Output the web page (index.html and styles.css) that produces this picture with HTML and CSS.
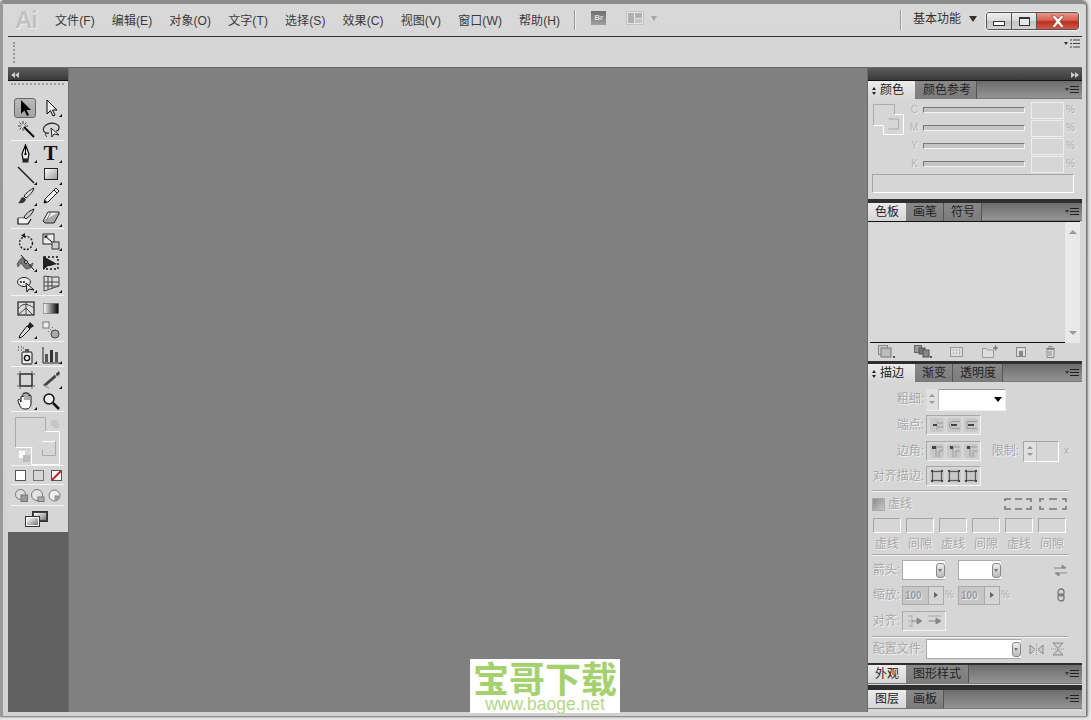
FILE: index.html
```html
<!DOCTYPE html>
<html lang="zh">
<head>
<meta charset="utf-8">
<title>Adobe Illustrator</title>
<link rel="stylesheet" href="styles.css">
</head>
<body>
<div class="window">
  <header class="titlebar">
    <span class="logo">Ai</span>
    <nav class="menu">
      <span>文件(F)</span><span>编辑(E)</span><span>对象(O)</span><span>文字(T)</span><span>选择(S)</span><span>效果(C)</span><span>视图(V)</span><span>窗口(W)</span><span>帮助(H)</span>
    </nav>
    <i class="vsep"></i>
    <span class="br">Br</span>
    <svg class="layout-ico" width="18" height="14" viewBox="0 0 18 14"><rect x=".5" y=".5" width="17" height="13" fill="#e4e4e4" stroke="#c4c4c4"/><rect x="2" y="2" width="6" height="10" fill="#b0b0b0"/><rect x="9" y="2" width="7" height="5" fill="#b0b0b0"/><rect x="9" y="8" width="7" height="4" fill="#c4c4c4"/></svg>
    <i class="tri-gray"></i>
    <span class="spacer"></span>
    <i class="vsep"></i>
    <span class="workspace">基本功能</span>
    <i class="tri-dark"></i>
    <div class="winctl">
      <span class="wbtn"><i class="min"></i></span>
      <span class="wbtn"><i class="max"></i></span>
      <span class="wbtn close"><svg width="16" height="13" viewBox="0 0 14 11"><path d="M1.500 .5h3.100L7 3.300 9.400 .5h3.100L8.700 5.400l3.800 5.100H9.400L7 7.400 4.600 10.500H1.500l3.800-5.100z" fill="#fff" stroke="#8a3a2e" stroke-width=".6"/></svg></span>
    </div>
  </header>
  <div class="optbar">
    <i class="grip-v"></i>
    <span class="opt-menu"><i class="tri-tiny"></i><svg width="10" height="9" viewBox="0 0 10 9"><path d="M0 1h2M3 1h7M0 4.500h2M3 4.500h7M0 8h2M3 8h7" stroke="#444"/></svg></span>
  </div>
  <main class="main">
    <aside class="toolbox">
      <div class="dock-head"><svg width="8" height="6" viewBox="0 0 8 6"><path d="M4 0v6L0 3zM8 0v6L4 3z" fill="#ccc"/></svg></div>
      <div class="tools">
        <i class="grip-h"></i>
        <div class="tgroup">
          <span class="tool selected"><svg viewBox="0 0 20 20"><path d="M6 2v14l3.400-3.400L12 18l2-1-2.500-5H16z"/></svg></span>
          <span class="tool more"><svg viewBox="0 0 20 20"><path d="M6 2v14l3.400-3.400L12 18l2-1-2.500-5H16z" fill="#eee" stroke="#000"/></svg></span>
          <span class="tool"><svg viewBox="0 0 20 20"><path d="M8 8l10 10" stroke="#000" stroke-width="2"/><path d="M7 2v3M7 9v3M2 7h3M9 7h3M3.500 3.500l2 2M10.500 3.500l-2 2M3.500 10.500l2-2" stroke="#444"/></svg></span>
          <span class="tool"><svg viewBox="0 0 20 20"><path d="M8 14C3 15 1 11 3 8s7-5 12-3 3 7 0 7" fill="none" stroke="#222" stroke-width="1.200"/><path d="M5 14c-1 2 0 3 1 4" fill="none" stroke="#222"/><path d="M10 9l1 9 2-3 5 1z" fill="#eee" stroke="#222"/></svg></span>
        </div>
        <div class="tgroup roomy">
          <span class="tool more"><svg viewBox="0 0 20 20"><path d="M9.500 1L13 10l-1 5H7L6 10z" fill="#eee" stroke="#000" stroke-width="1.200"/><path d="M9.500 3v7" stroke="#000"/><circle cx="9.500" cy="10" r="1.200"/><rect x="6.500" y="15" width="6" height="3.500" fill="#222"/></svg></span>
          <span class="tool more"><span class="t-glyph">T</span></span>
          <span class="tool more"><svg viewBox="0 0 20 20"><path d="M2 2l16 16" stroke="#111" stroke-width="1.200"/></svg></span>
          <span class="tool more"><svg viewBox="0 0 20 20"><defs><linearGradient id="tg" x1="0" y1="0" x2="1" y2="1"><stop offset="0" stop-color="#fff"/><stop offset="1" stop-color="#999"/></linearGradient></defs><rect x="3.500" y="3.500" width="13" height="11" fill="url(#tg)" stroke="#222"/></svg></span>
          <span class="tool more"><svg viewBox="0 0 20 20"><path d="M18 2c-3 1-8 5-10 8l2 2c3-2 7-6 8-10z" fill="#ddd" stroke="#222"/><path d="M7 11c-3 1-2 4-5 6 4 1 7 0 8-4z" fill="#333"/></svg></span>
          <span class="tool more"><svg viewBox="0 0 20 20"><path d="M15 2l3 3L7 16l-4 1 1-4z" fill="#eee" stroke="#222"/><path d="M13 4l3 3" stroke="#222"/><path d="M3 17l1-3 2 2z"/></svg></span>
          <span class="tool"><svg viewBox="0 0 20 20"><path d="M2 11h8l7-8" fill="none" stroke="#222"/><path d="M2 11v6h10l3-5" fill="#f2f2f2" stroke="#111" stroke-width="1.200"/><path d="M18 2c-3 1-8 4-10 8l2 2c3-2 7-6 8-10z" fill="#ccc" stroke="#222"/></svg></span>
          <span class="tool more"><svg viewBox="0 0 20 20"><path d="M7 5h11l-5 9H2z" fill="#eee" stroke="#222"/><path d="M2 14l2 2h9l5-9v-2" fill="#aaa" stroke="#222"/><path d="M10 5l-5 9" stroke="#777"/></svg></span>
        </div>
        <div class="tgroup">
          <span class="tool more"><svg viewBox="0 0 20 20"><circle cx="10" cy="11" r="6.500" fill="none" stroke="#222" stroke-width="1.400" stroke-dasharray="2 1.500"/><path d="M9 1v5L5 3.500z" fill="#222"/></svg></span>
          <span class="tool more"><svg viewBox="0 0 20 20"><rect x="2" y="2" width="11" height="10" fill="#eee" stroke="#222"/><rect x="11" y="10" width="7" height="7" fill="#ccc" stroke="#333"/><path d="M4 4l7 6" stroke="#000"/><path d="M3.500 3.500h4l-4 3z"/></svg></span>
          <span class="tool more"><svg viewBox="0 0 20 20"><path d="M1 11c3-5 5-8 7-5s2 7 5 6 4-2 4-2c0 3-3 6-6 6S6 9 4 11l-2 3z" fill="#777" stroke="#333" stroke-width=".6"/><path d="M5 2l13 15" stroke="#111"/><circle cx="10" cy="9" r="1.500" fill="#fff" stroke="#111"/></svg></span>
          <span class="tool"><svg viewBox="0 0 20 20"><rect x="3" y="4" width="14" height="12" fill="none" stroke="#111" stroke-width="1.400" stroke-dasharray="2 2"/><path d="M2 3v14l5-4 2 0 7-2z" fill="#222"/></svg></span>
          <span class="tool more"><svg viewBox="0 0 20 20"><ellipse cx="8" cy="8" rx="6.500" ry="4.500" fill="#eee" stroke="#222"/><circle cx="5" cy="8" r=".9"/><circle cx="8" cy="8" r=".9"/><path d="M10 9l1 9 2-3 5 1z" fill="#eee" stroke="#111"/></svg></span>
          <span class="tool more"><svg viewBox="0 0 20 20"><path d="M3 2l8 1 7 0v9l-15 5zM7 2.500V15M11 3v11M3 8h15M3 12h15" fill="#ddd" stroke="#444"/></svg></span>
        </div>
        <div class="tgroup">
          <span class="tool"><svg viewBox="0 0 20 20"><rect x="2" y="3" width="16" height="13" fill="#ddd" stroke="#222" stroke-width="1.200"/><path d="M2 10c4-6 9-6 16-1M10 3v13M3 15l7-6 7 7" fill="none" stroke="#444"/></svg></span>
          <span class="tool"><svg viewBox="0 0 20 20"><defs><linearGradient id="tb"><stop offset="0" stop-color="#fff"/><stop offset="1" stop-color="#000"/></linearGradient></defs><rect x="2.500" y="4.500" width="15" height="10" fill="url(#tb)" stroke="#555" stroke-width=".5"/></svg></span>
          <span class="tool more"><svg viewBox="0 0 20 20"><path d="M14 2l4 4-3 2-1 1-3-3 1-1z" fill="#222"/><path d="M11 6l3 3-8 8-3 1 1-3z" fill="#ddd" stroke="#111"/></svg></span>
          <span class="tool"><svg viewBox="0 0 20 20"><rect x="2" y="2" width="6" height="6" fill="#eee" stroke="#777"/><path d="M9 9l1 1M11 7l1 1M7 11l1 1M11 10l1 1" stroke="#777"/><circle cx="14" cy="14" r="4" fill="#aaa" stroke="#444"/></svg></span>
        </div>
        <div class="tgroup">
          <span class="tool more"><svg viewBox="0 0 20 20"><rect x="6" y="7" width="10" height="12" rx="1" fill="#eee" stroke="#111"/><circle cx="11" cy="13" r="2.600" fill="none" stroke="#111" stroke-width="1.400"/><rect x="9" y="4" width="4" height="3" fill="#555"/><path d="M2 2h1M5 2h1M2 5h1M5 5h1M7 3h1" stroke="#333"/></svg></span>
          <span class="tool more"><svg viewBox="0 0 20 20"><path d="M2 2v16h17" fill="none" stroke="#222"/><rect x="4" y="9" width="3" height="8" fill="#555"/><rect x="9" y="5" width="3" height="12" fill="#333"/><rect x="14" y="7" width="3" height="10" fill="#555"/></svg></span>
        </div>
        <div class="tgroup wide-end">
          <span class="tool"><svg viewBox="0 0 20 20"><rect x="4" y="4" width="12" height="12" fill="none" stroke="#111" stroke-width="1.300"/><path d="M1 4h2M17 4h2M1 16h2M17 16h2M4 1v2M16 1v2M4 17v2M16 17v2" stroke="#666"/></svg></span>
          <span class="tool more"><svg viewBox="0 0 20 20"><path d="M18 1L2 15l3 1L19 4z" fill="#444"/><path d="M14 3l2 5" stroke="#ddd"/><path d="M2 15l6 3" stroke="#888"/></svg></span>
          <span class="tool more"><svg viewBox="0 0 20 20"><path d="M5 11V6a1 1 0 012 0V3a1 1 0 012 0V2.500a1 1 0 012 0V3a1 1 0 012 0v2a1 1 0 012 0v7c0 4-2 6-5 6-4 0-5-1-6-3L2 10a1 1 0 012-1z" fill="#fff" stroke="#111"/><path d="M9 3v6M11 3v6M13 4v5" stroke="#111" stroke-width=".7"/></svg></span>
          <span class="tool"><svg viewBox="0 0 20 20"><circle cx="8" cy="8" r="5" fill="#eee" stroke="#111" stroke-width="1.500"/><path d="M12 12l6 6" stroke="#111" stroke-width="2.500"/></svg></span>
        </div>
        <div class="colorbox">
          <svg width="48" height="50" viewBox="0 0 48 50"><path d="M.5 30.500V.5h30v13" fill="none" stroke="#aaa"/><path d="M.5 30.500h17" stroke="#fff"/><path d="M30.500 14.500H44.500v33H16.500V31" fill="none" stroke="#fff"/><path d="M30.500 24.500h10v14h-13v-6" fill="none" stroke="#aaa"/><path d="M27 24.500h13" stroke="#fff"/><path d="M36 3l6 0 3 6-3 3-6-4z" fill="#c6c6c6"/><rect x="4" y="34" width="6" height="7" fill="#fff"/><rect x="8" y="38" width="7" height="7" fill="#bbb"/></svg>
        </div>
        <div class="modes">
          <i class="sq white"></i><i class="sq gray"></i>
          <svg class="sq none" viewBox="0 0 11 11"><rect x=".5" y=".5" width="10" height="10" fill="#fff" stroke="#555"/><path d="M1 10L10 1" stroke="#b3262c" stroke-width="2"/></svg>
        </div>
        <div class="modes tight">
          <svg width="13" height="13" viewBox="0 0 13 13"><circle cx="5.500" cy="5.500" r="5" fill="#ddd" stroke="#777"/><rect x="6" y="6" width="6.500" height="6.500" fill="#999" stroke="#777"/></svg>
          <svg width="14" height="13" viewBox="0 0 14 13"><circle cx="6" cy="6" r="5.500" fill="#e4e4e4" stroke="#777"/><rect x="7" y="8" width="6" height="4.500" fill="#aaa" stroke="#777"/></svg>
          <svg width="13" height="13" viewBox="0 0 13 13"><circle cx="6.500" cy="6.500" r="5.500" fill="#eee" stroke="#777"/><path d="M6.500 6.500H12A5.500 5.500 0 016.500 12z" fill="#999"/></svg>
        </div>
        <div class="screen">
          <svg width="24" height="16" viewBox="0 0 24 16"><defs><linearGradient id="tw" x1="0" y1="0" x2="1" y2="1"><stop offset="0" stop-color="#fff"/><stop offset="1" stop-color="#777"/></linearGradient></defs><rect x="7.500" y=".5" width="15" height="10" fill="#444" stroke="#333"/><rect x="9" y="2" width="12" height="7" fill="url(#tw)"/><rect x=".5" y="5.500" width="14" height="10" fill="#fff" stroke="#333"/><rect x="2" y="7" width="11" height="7" fill="url(#tw)"/></svg>
        </div>
      </div>
    </aside>

    <section class="canvas"></section>

    <aside class="dock">
      <div class="dock-head end"><svg width="8" height="6" viewBox="0 0 8 6"><path d="M0 0v6l4-3zM4 0v6l4-3z" fill="#ccc"/></svg></div>

      <section class="panel color">
        <div class="tabs">
          <span class="tab active tab-c"><i class="updown"></i>颜色</span><span class="tab t62">颜色参考</span>
          <span class="pmenu"><i class="tri-tiny"></i><i class="lines"></i></span>
        </div>
        <div class="color-body">
          <svg class="fs" width="32" height="32" viewBox="0 0 32 32"><path d="M.5 21.500V.5h21v10" fill="none" stroke="#aaa"/><path d="M.5 21.500h10" stroke="#fff"/><path d="M21.500 10.500h9v20h-20v-9" fill="none" stroke="#fff"/><path d="M15.500 15h10v10h-10" fill="none" stroke="#aaa"/></svg>
          <div class="cmyk">
            <div class="crow"><span class="clabel">C</span><i class="slider"></i><i class="fld cfld"></i><span class="dim">%</span></div>
            <div class="crow"><span class="clabel">M</span><i class="slider"></i><i class="fld cfld"></i><span class="dim">%</span></div>
            <div class="crow"><span class="clabel">Y</span><i class="slider"></i><i class="fld cfld"></i><span class="dim">%</span></div>
            <div class="crow"><span class="clabel">K</span><i class="slider"></i><i class="fld cfld"></i><span class="dim">%</span></div>
          </div>
          <i class="fld spectrum"></i>
        </div>
      </section>

      <section class="panel swatches">
        <div class="tabs">
          <span class="tab active">色板</span><span class="tab">画笔</span><span class="tab">符号</span>
          <span class="pmenu"><i class="tri-tiny"></i><i class="lines"></i></span>
        </div>
        <div class="sw-body">
          <div class="sw-area"></div>
          <div class="sw-scroll"><i class="sc-up"></i><i class="sc-down"></i></div>
        </div>
        <div class="sw-foot">
          <svg width="17" height="13" viewBox="0 0 17 13"><rect x=".5" y=".5" width="9" height="9" fill="#ccc" stroke="#888"/><rect x="3" y="3" width="10" height="9" fill="#bbb" stroke="#777"/><path d="M15 11l2 0v2h-2z" fill="#555"/></svg>
          <svg width="18" height="13" viewBox="0 0 18 13"><rect x=".5" y=".5" width="7" height="7" fill="#999" stroke="#666"/><rect x="5" y="3" width="6" height="6" fill="#777" stroke="#555"/><rect x="9" y="5" width="6" height="7" fill="#888" stroke="#555"/><path d="M16 11h2v2h-2z" fill="#555"/></svg>
          <svg width="13" height="10" viewBox="0 0 13 10"><rect x=".5" y=".5" width="12" height="9" fill="#ddd" stroke="#999"/><path d="M3 3h1M3 6h1M9 3h1M9 6h1M6 3h1M6 6h1" stroke="#888"/></svg>
          <svg width="16" height="13" viewBox="0 0 16 13"><path d="M.5 3.500h4l1 1.500h6v7.500h-11z" fill="#ddd" stroke="#999"/><path d="M11 3h5M13.500.5v5" stroke="#777" stroke-width="1.500"/></svg>
          <svg width="10" height="10" viewBox="0 0 10 10"><rect x=".5" y=".5" width="9" height="9" fill="#ddd" stroke="#888"/><rect x="3" y="4" width="4" height="5" fill="#888"/></svg>
          <svg width="11" height="12" viewBox="0 0 11 12"><path d="M1 2.500h9M4 2V.5h3V2" fill="none" stroke="#888"/><path d="M2 3.500h7V11.500H2z" fill="#ddd" stroke="#888"/><path d="M4 5v5M6 5v5" stroke="#888"/></svg>
        </div>
      </section>

      <section class="panel stroke">
        <div class="tabs">
          <span class="tab active tab-c"><i class="updown"></i>描边</span><span class="tab">渐变</span><span class="tab t50">透明度</span>
          <span class="pmenu"><i class="tri-tiny"></i><i class="lines"></i></span>
        </div>
        <div class="st-body">
          <div class="st-row">
            <span class="lbl">粗细:</span>
            <div class="combo"><span class="spin"><i class="up"></i><i class="dn"></i></span><i class="combo-tri"></i></div>
          </div>
          <div class="st-row">
            <span class="lbl">端点:</span>
            <div class="btn3">
              <svg viewBox="0 0 14 14"><path d="M7 2v10" stroke="#aaa"/><path d="M7 5h6M7 9h6" stroke="#999"/><path d="M3 7h4" stroke="#444" stroke-width="2"/></svg>
              <svg viewBox="0 0 14 14"><path d="M13 3.500H6a3.500 3.500 0 000 7h7" fill="none" stroke="#999"/><path d="M4 7h6" stroke="#444" stroke-width="2"/></svg>
              <svg viewBox="0 0 14 14"><path d="M13 3.500H3v7h10" fill="none" stroke="#999"/><path d="M4 7h6" stroke="#444" stroke-width="2"/></svg>
            </div>
          </div>
          <div class="st-row">
            <span class="lbl">边角:</span>
            <div class="btn3">
              <svg viewBox="0 0 14 14"><path d="M2 3h11M6 3v10M12 5v1M9 7h4M9 7v6" fill="none" stroke="#999"/><rect x="2" y="2" width="4" height="3" fill="#444"/></svg>
              <svg viewBox="0 0 14 14"><path d="M2 3h11M6 3v10M9 7h4M9 7v6" fill="none" stroke="#999"/><rect x="3" y="2" width="3" height="3" fill="#444"/></svg>
              <svg viewBox="0 0 14 14"><path d="M2 3h11M6 3v10M9 7h4M9 7v6" fill="none" stroke="#999"/><rect x="3" y="2" width="3" height="3" fill="#444"/></svg>
            </div>
            <span class="lbl limit">限制:</span>
            <div class="fld limit-f"><span class="spin"><i class="up"></i><i class="dn"></i></span></div>
            <span class="dim x">x</span>
          </div>
          <div class="st-row align-row">
            <span class="lbl">对齐描边:</span>
            <div class="btn3 sel">
              <svg viewBox="0 0 14 14"><rect x="2.500" y="2.500" width="9" height="9" fill="none" stroke="#555" stroke-width="1.200"/><path d="M1 1h2v2H1zM11 1h2v2h-2zM1 11h2v2H1zM11 11h2v2h-2z" fill="#444"/></svg>
              <svg viewBox="0 0 14 14"><rect x="2.500" y="2.500" width="9" height="9" fill="none" stroke="#555" stroke-width="1.200"/><path d="M1 1h2v2H1zM11 1h2v2h-2zM1 11h2v2H1zM11 11h2v2h-2z" fill="#444"/></svg>
              <svg viewBox="0 0 14 14"><rect x="2.500" y="2.500" width="9" height="9" fill="none" stroke="#555" stroke-width="1.200"/><path d="M1 1h2v2H1zM11 1h2v2h-2zM1 11h2v2H1zM11 11h2v2h-2z" fill="#444"/></svg>
            </div>
          </div>
          <hr class="rule">
          <div class="dash-head">
            <i class="check"></i><span class="lbl plain">虚线</span>
            <span class="spacer"></span>
            <svg width="28" height="12" viewBox="0 0 28 12"><path d="M1 3V1h6M11 1h7M22 1h5v3M1 8v3h6M11 11h7M22 11h5V8" fill="none" stroke="#777" stroke-width="1.600"/></svg>
            <svg width="28" height="12" viewBox="0 0 28 12"><path d="M1 4V1h4M10 1h8M23 1h4v3M1 8v3h4M10 11h8M23 11h4V8" fill="none" stroke="#777" stroke-width="1.600"/></svg>
          </div>
          <div class="dash-grid">
            <i class="fld"></i><i class="fld"></i><i class="fld"></i><i class="fld"></i><i class="fld"></i><i class="fld"></i>
            <span class="lbl plain">虚线</span><span class="lbl plain">间隙</span><span class="lbl plain">虚线</span><span class="lbl plain">间隙</span><span class="lbl plain">虚线</span><span class="lbl plain">间隙</span>
          </div>
          <hr class="rule r2">
          <div class="arrow-row">
            <span class="lbl">箭头:</span>
            <div class="sel-box"><i class="mini"></i></div>
            <div class="sel-box"><i class="mini"></i></div>
            <span class="spacer"></span>
            <svg width="13" height="11" viewBox="0 0 13 11"><path d="M0 3h11M8 0l4 3-4 0zM13 8H2M5 11L1 8h4z" fill="#888" stroke="#888"/></svg>
          </div>
          <div class="arrow-row">
            <span class="lbl">缩放:</span>
            <div class="pct"><span>100</span><i></i></div><span class="dim p">%</span>
            <div class="pct"><span>100</span><i></i></div><span class="dim p">%</span>
            <span class="spacer"></span>
            <svg class="linkico" width="8" height="14" viewBox="0 0 8 14"><rect x="1" y="1" width="6" height="7" rx="3" fill="none" stroke="#777" stroke-width="1.300"/><rect x="1" y="6" width="6" height="7" rx="3" fill="none" stroke="#777" stroke-width="1.300"/></svg>
          </div>
          <div class="arrow-row last-arrow">
            <span class="lbl">对齐:</span>
            <div class="btn2">
              <svg viewBox="0 0 16 14"><path d="M1 2h4M1 7h6M1 12h4M5 1v12" stroke="#aaa" fill="none"/><path d="M5 7h5V4l5 3-5 3V7" fill="#888" stroke="#888"/></svg>
              <svg viewBox="0 0 16 14"><path d="M2 2h13M2 7h3" stroke="#aaa" fill="none"/><path d="M4 7h6V4l5 3-5 3V7" fill="#888" stroke="#888"/></svg>
            </div>
          </div>
          <hr class="rule r3">
          <div class="arrow-row profile">
            <span class="lbl">配置文件:</span>
            <div class="sel-box long"><i class="mini"></i></div>
            <svg width="15" height="11" viewBox="0 0 15 11"><path d="M1 1l5 4.500L1 10zM14 1L9 5.500 14 10z" fill="#ccc" stroke="#888"/><path d="M7.500 0v11" stroke="#999" stroke-dasharray="1 1"/></svg>
            <svg width="14" height="14" viewBox="0 0 14 14"><path d="M2 1h10L7 6.500zM2 13h10L7 7.500z" fill="#ccc" stroke="#888"/><path d="M0 7h14" stroke="#999" stroke-dasharray="1 1"/></svg>
          </div>
        </div>
      </section>

      <section class="panel collapsed">
        <div class="tabs">
          <span class="tab active">外观</span><span class="tab t63">图形样式</span>
          <span class="pmenu"><i class="tri-tiny"></i><i class="lines"></i></span>
        </div>
      </section>
      <section class="panel collapsed last">
        <div class="tabs">
          <span class="tab active">图层</span><span class="tab">画板</span>
          <span class="pmenu"><i class="tri-tiny"></i><i class="lines"></i></span>
        </div>
      </section>
    </aside>
  </main>
</div>
<div class="watermark">
  <div class="wm-title">宝哥下载</div>
  <div class="wm-url">www.baoge.net</div>
</div>
</body>
</html>
```

FILE: styles.css
```css
* { box-sizing: border-box; }
html, body { margin: 0; height: 100%; overflow: hidden; }
body {
  background: #e6e6e6;
  font: 12px/1.2 "Liberation Sans", "Noto Sans CJK SC", sans-serif;
  color: #333;
  position: relative;
}
i { display: block; font-style: normal; }
svg { display: block; flex: none; }
.spacer { flex: 1; }

.window {
  width: 1087px;
  height: 716px;
  display: flex;
  flex-direction: column;
  border-top: 4px solid #8c8c8c;
  border-left: 3px solid #9a9a9a;
  border-right: 1px solid #777;
  border-radius: 4px 6px 0 0;
  padding: 0 4px 4px 5px;
  background: linear-gradient(#d8d8d8, #d2d2d2);
  box-shadow: 0 1px 2px #777, 1px 0 2px #999;
}

/* title bar */
.titlebar {
  height: 32px;
  display: flex;
  align-items: center;
  flex: none;
  margin-left: -4px;
  padding-bottom: 1px;
}
.logo {
  width: 22px;
  margin-left: 11px;
  font: bold 24px/1 "Liberation Sans", sans-serif;
  letter-spacing: -1px;
  color: #c2c2c2;
  text-shadow: 1px 1px 0 #eee;
}
.menu { display: flex; gap: 17px; margin-left: 18px; margin-top: 3px; color: #3a3a3a; letter-spacing: .1px; }
.vsep { height: 20px; background: #999; border-right: 1px solid #eee; width: 2px; }
.titlebar > .vsep:nth-of-type(1) { margin-left: 14px; }
.br {
  width: 15px; height: 14px; margin-left: 15px; margin-top: -3px;
  background: linear-gradient(#6e6e6e, #a0a0a0);
  font: bold 8px/14px "Liberation Sans", sans-serif;
  color: #ddd; text-align: center;
}
.layout-ico { margin-left: 20px; margin-top: -3px; }
.tri-gray { margin: -3px 0 0 7px; border: 3.500px solid transparent; border-top: 5px solid #a8a8a8; border-bottom: 0; }
.workspace { margin-left: 11px; color: #333; margin-top: -1px; }
.tri-dark { margin: -2px 0 0 8px; border: 4px solid transparent; border-top: 6px solid #333; border-bottom: 0; }
.winctl {
  display: flex; margin-left: 9px; margin-right: 3px; margin-top: 3px;
  height: 18px; border: 1px solid #555; border-radius: 3px;
  box-shadow: 0 0 0 1px #eee;
  overflow: hidden;
}
.wbtn {
  width: 25px; display: flex; align-items: center; justify-content: center;
  background: linear-gradient(#f0f0f0, #d8d8d8 50%, #c4c4c4 51%, #d4d4d4);
  border-right: 1px solid #555;
}
.wbtn.close {
  width: 41px; border-right: 0;
  background: linear-gradient(#e59a8c, #d6604f 45%, #bb2e1f 55%, #cf5a48);
}
.min { width: 12px; height: 5px; margin-top: 5px; background: #fff; border: 1px solid #333; }
.max { width: 11px; height: 9px; background: #e8e8e8; border: 1px solid #333; border-top-width: 2px; }

/* option bar */
.optbar {
  height: 32px; flex: none;
  border-top: 1px solid #333;
  border-bottom: 1px solid #6a6a6a;
  background: #d6d6d6;
  display: flex; align-items: flex-start; justify-content: space-between;
}
.grip-v { width: 3px; height: 21px; margin: 5px 0 0 5px; border-left: 2px dotted #999; }
.opt-menu { display: flex; align-items: center; gap: 2px; margin: 2px 2px 0 0; }
.tri-tiny { border: 2.500px solid transparent; border-top: 3px solid #333; border-bottom: 0; }

/* layout */
.main { flex: 1; display: flex; min-height: 0; }
.toolbox { width: 60px; flex: none; background: #606060; display: flex; flex-direction: column; }
.canvas { flex: 1; background: #808080; border-left: 1px solid #6e6e6e; border-right: 1px solid #6a6a6a; }
.dock { width: 214px; flex: none; background: #2e2e2e; display: flex; flex-direction: column; }
.dock-head {
  height: 13px; flex: none; padding: 4px 3px 0 3px;
  background: linear-gradient(#5c5c5c, #3a3a3a);
  border-bottom: 1px solid #111;
}
.dock-head.end { display: flex; justify-content: flex-end; }

/* toolbox */
.tools { background: #d6d6d6; height: 451px; padding: 2px 0 0 3px; }
.grip-h { height: 4px; margin: 0 4px 10px 0; border-top: 2px dotted #a0a0a0; }
.tgroup {
  display: grid; grid-template-columns: 25px 25px; grid-auto-rows: 21px;
  width: 53px; padding: 2px 0 1px 2px;
  border-bottom: 1px solid #f4f4f4;
}
.tgroup:first-of-type { padding-top: 0; }
.tgroup.roomy { grid-auto-rows: 21.25px; padding-bottom: 0; }
.tgroup.wide-end { padding-bottom: 0; }
.tool { position: relative; display: flex; align-items: center; justify-content: center; }
.tool svg { width: 20px; height: 20px; }
.tool.selected {
  margin: 1px 2px 0 1px; border: 1px solid #666; border-radius: 3px;
  background: linear-gradient(#bbb, #a4a4a4);
}
.tool.more::after {
  content: ""; position: absolute; right: 1px; bottom: 1px;
  border-style: solid; border-width: 0 0 3px 3px;
  border-color: transparent transparent #111 transparent;
}
.t-glyph { font: bold 21px/1 "Liberation Serif", serif; color: #111; }
.colorbox { height: 54px; width: 53px; padding: 5px 0 0 4px; border-bottom: 1px solid #f4f4f4; }
.modes { width: 53px; height: 19px; padding: 4px 0 0 4px; display: flex; gap: 7px; border-bottom: 1px solid #f4f4f4; }
.modes.tight { height: 21px; gap: 3px; }
.sq { width: 11px; height: 11px; }
.sq.white { background: #fff; border: 1px solid #555; }
.sq.gray { background: #d6d6d6; border: 1px solid #777; }
.screen { padding: 5px 0 0 14px; }

/* panels */
.panel { background: #d6d6d6; flex: none; }
.tabs {
  display: flex; height: 18px;
  background: linear-gradient(#6c6c6c, #949494);
  border-bottom: 1px solid #777;
}
.tab {
  width: 38px; height: 18px; padding: 1px 0 0 7px; line-height: 17px;
  color: #222; border-right: 1px solid #555;
  background: linear-gradient(#888, #7c7c7c);
  white-space: nowrap;
  display: flex; align-items: center;
}
.tab.active { background: linear-gradient(#ececec, #d6d6d6); border-right: 0; }
.tab-c { width: 47px; padding-left: 4px; }
.t62 { width: 62px; padding-left: 8px; }
.t50 { width: 50px; }
.t63 { width: 63px; }
.updown { width: 5px; height: 8px; margin-right: 3px; position: relative; }
.updown::before, .updown::after { content: ""; position: absolute; left: 0; border: 2.500px solid transparent; }
.updown::before { top: 0; border-bottom: 3px solid #222; border-top: 0; }
.updown::after { bottom: 0; border-top: 3px solid #222; border-bottom: 0; }
.pmenu { margin-left: auto; display: flex; align-items: center; gap: 1px; padding: 0 3px 1px 0; }
.lines { width: 9px; height: 7px; border-top: 1px solid #222; border-bottom: 1px solid #222; position: relative; }
.lines::after { content: ""; position: absolute; left: 0; right: 0; top: 2px; height: 1px; background: #222; }

.color { height: 118px; margin-bottom: 4px; }
.color-body { padding: 5px 0 0 5px; display: grid; grid-template-columns: 35px 1fr; }
.cmyk { display: grid; grid-auto-rows: 18px; margin-top: -3px; }
.crow { display: flex; align-items: center; height: 18px; }
.clabel { width: 10px; color: #b4b4b4; text-shadow: 1px 1px 0 #eee; font-size: 10px; text-align: right; margin-right: 5px; }
.slider { width: 102px; height: 6px; background: #c4c4c4; border: 1px solid #777; border-bottom-color: #f4f4f4; border-right-color: #f4f4f4; }
.fld { background: #d6d6d6; border: 1px solid #fff; border-top-color: #a6a6a6; border-left-color: #a6a6a6; display: block; }
.cfld { width: 33px; height: 17px; margin-left: 6px; border-color: #ededed; }
.dim { color: #aaa; font-size: 10px; text-shadow: 1px 1px 0 #eee; margin-left: 2px; }
.spectrum { grid-column: 1 / 3; width: 202px; height: 19px; margin: 1px 0 0 -1px; }

.swatches { height: 158px; margin-bottom: 3px; }
.sw-body { display: flex; height: 122px; padding-left: 2px; border-top: 1px solid #111; margin-right: 2px; }
.sw-area { flex: 1; border-bottom: 1px solid #111; background: #d8d8d8; }
.sw-scroll { width: 15px; background: #e9e9e9; padding: 8px 3px; display: flex; flex-direction: column; justify-content: space-between; height: 121px; align-items: center; }
.sc-up { border: 4px solid transparent; border-bottom: 4px solid #999; border-top: 0; }
.sc-down { border: 4px solid transparent; border-top: 4px solid #999; border-bottom: 0; }
.sw-foot { display: flex; align-items: center; height: 17px; padding: 0 26px 0 10px; justify-content: space-between; }

.stroke { height: 299px; margin-bottom: 2px; }
.st-body { padding: 7px 3px 0 3px; }
.st-row { display: flex; align-items: center; height: 20px; margin-bottom: 6px; }
.st-row.align-row { margin-top: -1px; }
.lbl {
  color: #a8a8a8; text-shadow: 1px 1px 0 #f2f2f2;
  width: 53px; text-align: right; white-space: nowrap; flex: none; margin-right: 2px;
}
.lbl.plain { width: auto; margin: 0; }
.combo { width: 79px; height: 21px; background: #fff; display: flex; align-items: center; justify-content: space-between; box-shadow: inset 1px 1px 0 #999, 1px 1px 0 #eee; }
.spin { width: 13px; height: 100%; background: #e0e0e0; border-right: 1px solid #bbb; display: flex; flex-direction: column; align-items: center; justify-content: space-around; padding: 3px 0; flex: none; }
.spin .up { border: 3px solid transparent; border-bottom: 3px solid #999; border-top: 0; }
.spin .dn { border: 3px solid transparent; border-top: 3px solid #999; border-bottom: 0; }
.combo-tri { margin-right: 3px; border: 4px solid transparent; border-top: 5px solid #000; border-bottom: 0; }
.btn3 { width: 55px; height: 20px; display: flex; justify-content: space-around; align-items: center; border: 1px solid #a8a8a8; border-right-color: #f4f4f4; border-bottom-color: #f4f4f4; padding: 0 1px; }
.btn3 svg { width: 14px; height: 14px; background: #c8c8c8; border-radius: 3px; }
.lbl.limit { width: 30px; margin-left: 8px; margin-right: 4px; }
.limit-f { width: 36px; height: 21px; }
.x { margin-left: 5px; }
.rule { border: 0; border-top: 1px solid #a8a8a8; border-bottom: 1px solid #f4f4f4; height: 2px; margin: -2px 10px 0 1px; width: 196px; }
.dash-head { display: flex; align-items: center; height: 14px; margin: 5px 12px 0 1px; gap: 7px; }
.dash-head .plain { margin-left: -4px; }
.check { width: 13px; height: 13px; background: linear-gradient(135deg, #8c8c8c, #c6c6c6); border: 1px solid #eee; outline: 1px solid #aaa; outline-offset: -1px; }
.dash-grid { display: grid; grid-template-columns: repeat(6, 28px); column-gap: 5px; grid-template-rows: 15px 15px; row-gap: 4px; margin: 7px 0 0 2px; justify-items: center; }
.dash-grid .fld { width: 28px; height: 15px; }
.rule.r2 { margin-top: 2px; margin-bottom: -1px; }
.arrow-row { display: flex; align-items: center; height: 20px; margin: 5px 12px 5px 0; }
.arrow-row.last-arrow { margin-top: 6px; }
.arrow-row .lbl { width: 29px; margin-right: 2px; }
.sel-box { width: 43px; height: 20px; background: #fff; border: 1px solid #aaa; border-right: 0; display: flex; justify-content: flex-end; align-items: center; margin-right: 13px; }
.mini { width: 9px; height: 15px; border-radius: 3px; background: linear-gradient(#eee, #bbb); border: 1px solid #888; position: relative; }
.mini::after { content: ""; position: absolute; top: 5px; left: 1px; border: 2.500px solid transparent; border-top: 3px solid #777; border-bottom: 0; }
.pct { width: 42px; height: 19px; display: flex; border: 1px solid #aaa; background: #c6c6c6; }
.pct span { flex: 1; font: bold 10px/17px "Liberation Sans", sans-serif; color: #999; text-shadow: 1px 1px 0 #eee; padding-left: 2px; }
.pct i { width: 15px; background: #d6d6d6; border-left: 1px solid #aaa; position: relative; }
.pct i::after { content: ""; position: absolute; left: 5px; top: 5px; border: 3.500px solid transparent; border-left: 4px solid #666; border-right: 0; }
.p { width: 11px; margin: 0 2px 0 1px; }
.linkico { margin-right: 2px; }
.btn2 { width: 44px; height: 20px; display: flex; justify-content: space-around; align-items: center; border: 1px solid #aaa; border-right-color: #f4f4f4; border-bottom-color: #f4f4f4; padding: 0 2px; }
.btn2 svg { width: 16px; height: 14px; }
.rule.r3 { margin-top: 5px; }
.arrow-row.profile { margin: 0; height: 22px; }
.profile .lbl { width: 53px; }
.sel-box.long { width: 95px; margin-right: 8px; }
.profile svg + svg { margin-left: 7px; }
.collapsed { height: 20px; margin-bottom: 5px; }
.collapsed .tabs { height: 19px; }
.collapsed.last { height: 22px; margin-bottom: 0; }
.collapsed.last .tab { padding-top: 0; }

/* watermark */
.watermark {
  position: absolute; left: 470px; top: 659px;
  width: 150px; height: 54px; background: #fff; text-align: center;
}
.wm-title { font: 700 36px/36px "Noto Sans CJK SC", sans-serif; color: #a5d06e; white-space: nowrap; }
.wm-url { font: 17.500px/18px "Liberation Sans", sans-serif; color: #b4d68a; }
```
